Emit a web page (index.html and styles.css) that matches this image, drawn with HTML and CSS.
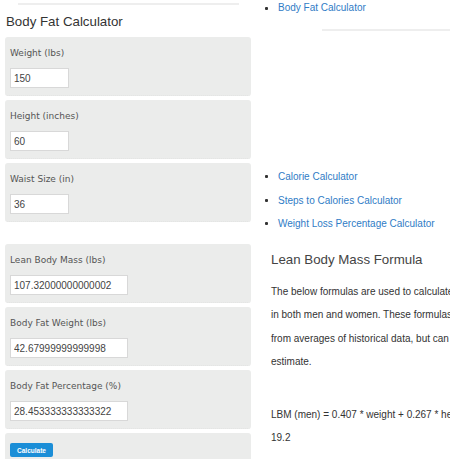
FILE: index.html
```html
<!DOCTYPE html>
<html lang="en">
<head>
  <meta charset="UTF-8">
  <title>Body Fat Calculator</title>
  <meta name="viewport" content="width=device-width, initial-scale=1">
  <link rel="stylesheet" href="styles.css">
</head>
<body>
  <div class="page">
    <div class="calc">
      <div class="top-rule"></div>
      <h1>Body Fat Calculator</h1>

      <div class="field">
        <label for="weight">Weight (lbs)</label>
        <input type="text" id="weight" value="150">
      </div>
      <div class="field">
        <label for="height">Height (inches)</label>
        <input type="text" id="height" value="60">
      </div>
      <div class="field">
        <label for="waist">Waist Size (in)</label>
        <input type="text" id="waist" value="36">
      </div>

      <div class="results">
        <div class="field">
          <label for="lbm">Lean Body Mass (lbs)</label>
          <input type="text" id="lbm" class="wide" value="107.32000000000002">
        </div>
        <div class="field">
          <label for="bfw">Body Fat Weight (lbs)</label>
          <input type="text" id="bfw" class="wide" value="42.67999999999998">
        </div>
        <div class="field">
          <label for="bfp">Body Fat Percentage (%)</label>
          <input type="text" id="bfp" class="wide" value="28.453333333333322">
        </div>
        <div class="field actions">
          <button type="button">Calculate</button>
        </div>
      </div>
    </div>

    <div class="side">
      <ul class="links">
        <li><a href="#">Body Fat Calculator</a></li>
      </ul>
      <div class="side-rule"></div>
      <div class="ad-slot"></div>
      <ul class="links related">
        <li><a href="#">Calorie Calculator</a></li>
        <li><a href="#">Steps to Calories Calculator</a></li>
        <li><a href="#">Weight Loss Percentage Calculator</a></li>
      </ul>

      <h2>Lean Body Mass Formula</h2>
      <p>The below formulas are used to calculate lean body mass (LBM)<br>
        in both men and women. These formulas were derived<br>
        from averages of historical data, but can only provide an<br>
        estimate.</p>
      <p>LBM (men) = 0.407 * weight + 0.267 * height -<br>
        19.2</p>
    </div>
  </div>
</body>
</html>
```

FILE: styles.css
```css
body, html {
  margin: 0;
  padding: 0;
  background: #fff;
  font-family: "Liberation Sans", Arial, sans-serif;
  overflow: hidden;
}

.page {
  display: flex;
  align-items: flex-start;
}

/* left column */
.calc {
  flex: none;
  width: 246px;
  margin-left: 5px;
}

.top-rule {
  height: 2px;
  margin: 3px 12px 0 13px;
  background: #eeeeee;
}

h1 {
  margin: 9px 0 7px 1px;
  font-size: 13.3px;
  line-height: 16px;
  font-weight: normal;
  color: #333;
}

.field {
  background: #ebeceb;
  border-radius: 3px;
  padding: 9px 5px 8px;
  border-bottom: 1px dotted #e2e3e2;
  height: 41px;
}

.field + .field {
  margin-top: 4px;
}

.field label {
  display: block;
  font-family: "DejaVu Sans", Verdana, sans-serif;
  font-size: 9px;
  line-height: 14px;
  color: #555;
}

.field input {
  display: block;
  box-sizing: border-box;
  width: 59px;
  height: 20px;
  margin-top: 8px;
  padding: 0 3px;
  border: 1px solid #d8d8d8;
  background: #fff;
  font-family: "Liberation Sans", Arial, sans-serif;
  font-size: 10px;
  color: #444;
}

.field input.wide {
  width: 118px;
}

.results {
  margin-top: 22px;
}

.actions {
  padding-top: 10px;
}

.actions button {
  display: block;
  width: 43px;
  height: 14px;
  padding: 0;
  border: none;
  border-radius: 2px;
  background: #1b8ed7;
  color: #fff;
  font-family: "Liberation Sans", Arial, sans-serif;
  font-size: 6.5px;
  font-weight: bold;
  cursor: pointer;
}

/* right column */
.side {
  flex: none;
  width: 320px;
  font-size: 10px;
  color: #333;
}

.links {
  margin: 0;
  padding: 0;
  list-style: none;
}

.links li {
  display: flex;
  align-items: center;
  padding-left: 14px;
  line-height: 16px;
  white-space: nowrap;
}

.links li::before {
  content: "";
  width: 3px;
  height: 3px;
  margin-right: 10px;
  border-radius: 1px;
  background: #333;
}

.links a {
  color: #2f7cc6;
  text-decoration: none;
}

.side-rule {
  height: 2px;
  margin: 13px 0 0 71px;
  background: #eeeeee;
}

.ad-slot {
  height: 134px;
}

.related li {
  line-height: 23.5px;
}

h2 {
  margin: 14px 0 0 20px;
  font-size: 13.3px;
  line-height: 20px;
  font-weight: normal;
  color: #444;
}

.side p {
  margin: 10px 0 0 20px;
  line-height: 23.5px;
  white-space: nowrap;
}

.side p + p {
  margin-top: 29px;
}
```
